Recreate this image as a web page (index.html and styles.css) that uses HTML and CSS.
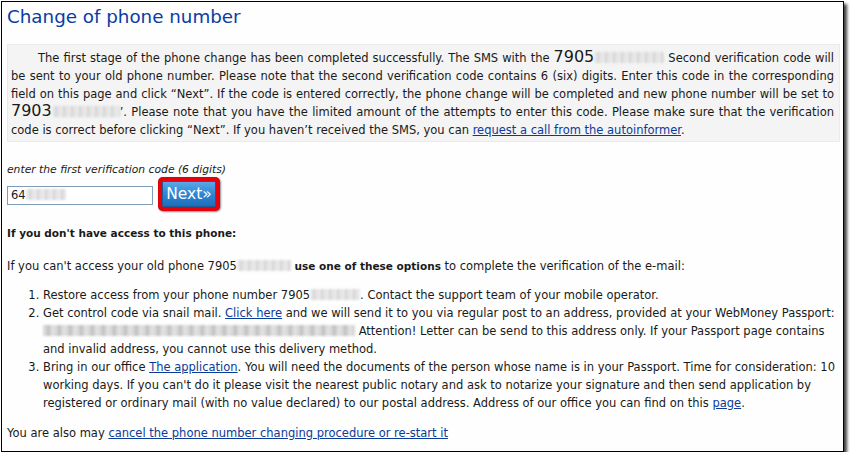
FILE: index.html
```html
<!DOCTYPE html>
<html>
<head>
<meta charset="utf-8">
<link rel="stylesheet" href="styles.css">
</head>
<body>
<div class="frame">
  <h1 class="title">Change of phone number</h1>
  <div class="notice">
    <p>The first stage of the phone change has been completed successfully. The SMS with the <span class="big">7905</span><span class="blur w70"></span> Second verification code will be sent to your old phone number. Please note that the second verification code contains 6 (six) digits. Enter this code in the corresponding field on this page and click “Next”. If the code is entered correctly, the phone change will be completed and new phone number will be set to <span class="big">7903</span><span class="blur w68"></span>’. Please note that you have the limited amount of the attempts to enter this code. Please make sure that the verification code is correct before clicking “Next”. If you haven’t received the SMS, you can <a href="#">request a call from the autoinformer</a>.</p>
  </div>
  <div class="label">enter the first verification code (6 digits)</div>
  <div class="form-row">
    <div class="input">64<span class="blur w40"></span></div>
    <span class="btn-ring"><button class="btn">Next»</button></span>
  </div>
  <p class="heading">If you don't have access to this phone:</p>
  <p class="para">If you can't access your old phone 7905<span class="blur w54"></span> <b>use one of these options</b> to complete the verification of the e-mail:</p>
  <ol class="options">
    <li>Restore access from your phone number 7905<span class="blur w50"></span>. Contact the support team of your mobile operator.</li>
    <li>Get control code via snail mail. <a href="#">Click here</a> and we will send it to you via regular post to an address, provided at your WebMoney Passport: <span class="blur dark w312"></span> Attention! Letter can be send to this address only. If your Passport page contains and invalid address, you cannot use this delivery method.</li>
    <li>Bring in our office <a href="#">The application</a>. You will need the documents of the person whose name is in your Passport. Time for consideration: 10 working days. If you can't do it please visit the nearest public notary and ask to notarize your signature and then send application by registered or ordinary mail (with no value declared) to our postal address. Address of our office you can find on this <a href="#">page</a>.</li>
  </ol>
  <p class="footer">You are also may <a href="#">cancel the phone number changing procedure or re-start it</a></p>
</div>
</body>
</html>
```

FILE: styles.css
```css
html, body {
  margin: 0;
  padding: 0;
  background: #ffffff;
}

body {
  font-family: "DejaVu Sans", Verdana, sans-serif;
  font-size: 11.5px;
  color: #1a1a1a;
}

.frame {
  box-sizing: border-box;
  margin: 1px 0 0 1px;
  width: 843px;
  height: 451px;
  border: 1px solid #000;
  box-shadow: 3px 3px 3px rgba(0, 0, 0, 0.75);
  background: #fdfefd;
  padding: 3px 3px 0 5px;
}

.title {
  margin: 0;
  font-weight: normal;
  font-size: 18.3px;
  line-height: 24px;
  color: #0a3ca5;
}

.notice {
  margin-top: 15px;
  background: #f3f4f3;
  border: 1px solid #ebebeb;
  padding: 4px 5px 2px 3px;
}

.notice p {
  margin: 0;
  line-height: 18px;
  text-align: justify;
  text-indent: 27px;
}

.big {
  font-size: 16px;
  line-height: 11px;
}

a {
  color: #0c3a99;
  text-decoration: underline;
}

b {
  font-size: 10.5px;
}

.blur {
  display: inline-block;
  height: 11px;
  vertical-align: -1px;
  background: repeating-linear-gradient(90deg, #e9e9e9 0 3px, #d4d4d4 3px 5px, #e4e4e4 5px 8px);
  filter: blur(1.3px);
}

.blur.dark {
  background: repeating-linear-gradient(90deg, #d8d8d8 0 4px, #bdbdbd 4px 6px, #d2d2d2 6px 9px, #e6e6e6 9px 11px);
}

.w40 { width: 40px; }
.w50 { width: 50px; }
.w54 { width: 54px; }
.w68 { width: 68px; }
.w70 { width: 70px; }
.w312 { width: 312px; }

.label {
  margin-top: 21px;
  font-style: italic;
  font-size: 10.75px;
  line-height: 14px;
}

.form-row {
  display: flex;
  align-items: center;
  gap: 5px;
}

.input {
  box-sizing: border-box;
  width: 146px;
  height: 19px;
  border: 1px solid #7f9db9;
  background: #fff;
  padding: 1px 3px;
  line-height: 15px;
  margin-top: 2px;
}

.btn-ring {
  display: inline-flex;
  padding: 4px;
  border-radius: 5px;
  background: #e8000b;
  box-shadow: 1px 1px 2px rgba(0, 0, 0, 0.45), inset 0 0 1px #900;
}

.btn {
  box-sizing: border-box;
  width: 54px;
  height: 26px;
  padding: 0;
  border: 1px solid #1d5b96;
  border-radius: 1px;
  background: linear-gradient(#5aa8e8, #2f86d2 50%, #1f6fbc);
  color: #fff;
  font-family: "DejaVu Sans", Verdana, sans-serif;
  font-size: 15.5px;
  line-height: 22px;
}

.heading {
  margin: 13px 0 0;
  font-weight: bold;
  font-size: 10.5px;
  line-height: 18px;
}

.para {
  margin: 15px 0 0;
  line-height: 18px;
}

.options {
  margin: 11px 0 0;
  padding-left: 36px;
  line-height: 18px;
}

.footer {
  margin: 12px 0 0;
  line-height: 18px;
}
```
